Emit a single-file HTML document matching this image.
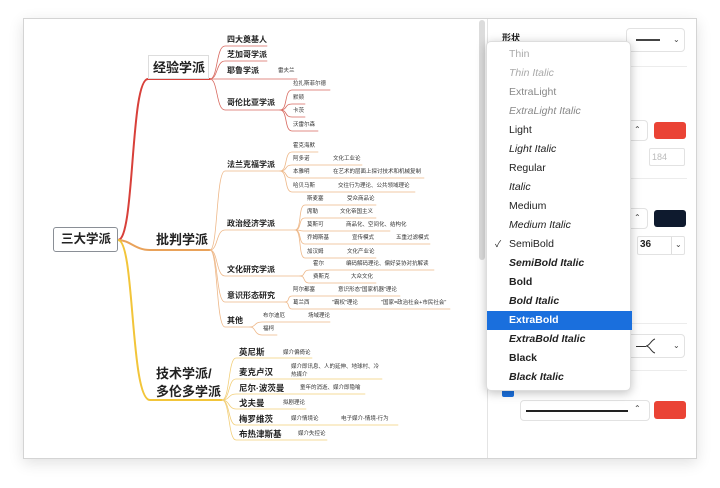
<!DOCTYPE html>
<html><head><meta charset="utf-8"><style>
*{margin:0;padding:0;box-sizing:border-box}
body{width:720px;height:488px;background:#fff;position:relative;overflow:hidden;font-family:"Liberation Sans","Noto Sans CJK SC",sans-serif}
#win{position:absolute;left:23px;top:18px;width:674px;height:441px;background:#fff;border:1px solid #d4d4d4;box-shadow:0 4px 14px rgba(0,0,0,.12)}
.t{position:absolute;white-space:nowrap;color:#222;line-height:1}
.l2{font-size:8px;font-weight:bold}
.l3{font-size:5.5px;color:#333}
.l1{font-size:13px;font-weight:bold}
#panel{position:absolute;left:487px;top:19px;width:209px;height:439px;background:#fff;border-left:1px solid #e4e4e4}
.sep{position:absolute;left:497px;width:190px;height:1px;background:#ececec}
.box{position:absolute;border:1px solid #e2e2e2;border-radius:4px;background:#fff}
.sw{position:absolute;border-radius:3px}
#menu{position:absolute;left:486px;top:41px;width:145px;height:350px;background:#fff;border-radius:5px;box-shadow:0 2px 10px rgba(0,0,0,.25);border:1px solid #ddd}
.mi{position:absolute;left:0;width:145px;height:19px;line-height:19px;padding-left:22px;font-size:10.5px;color:#222}
.chev{position:absolute;font-size:8px;color:#444}
</style></head><body>
<div id="win"></div>
<div style="position:absolute;left:479px;top:20px;width:6px;height:240px;background:#dcdcdc;border-radius:3px"></div>
<div id="panel"></div>

<svg style="position:absolute;left:0;top:0" width="720" height="488" fill="none" stroke-linecap="round">
<path d="M118 240 C135 240,130 79,148 79 L210 79" stroke="#d8403a" stroke-width="2"/>
<path d="M118 240 C130 240,135 250,150 250 L210 250" stroke="#e9a25a" stroke-width="2"/>
<path d="M118 240 C135 240,130 400,150 400 L222 400" stroke="#f2c53a" stroke-width="2"/>
<g stroke="#d86a60" stroke-width="0.8">
<path d="M210 79 C218 79,216 46,225 46 L267 46"/>
<path d="M210 79 C218 79,216 61,225 61 L267 61"/>
<path d="M210 79 L297 79"/>
<path d="M210 79 C218 79,216 110,225 110 L280 110"/>
<path d="M280 110 C288 110,284 90,292 90 L330 90"/>
<path d="M280 110 C288 110,284 104,292 104 L305 104"/>
<path d="M280 110 C288 110,284 117,292 117 L305 117"/>
<path d="M280 110 C288 110,284 131,292 131 L318 131"/>
</g>
<g stroke="#eeb889" stroke-width="0.8">
<path d="M210 250 C218 250,216 171,225 171 L280 171"/>
<path d="M280 171 C288 171,284 152,292 152 L318 152"/>
<path d="M280 171 C288 171,284 165,292 165 L362 165"/>
<path d="M280 171 C288 171,284 178,292 178 L424 178"/>
<path d="M280 171 C288 171,284 192,292 192 L415 192"/>
<path d="M210 250 C218 250,216 230,225 230 L295 230"/>
<path d="M295 230 C302 230,298 205,305 205 L376 205"/>
<path d="M295 230 C302 230,298 218,305 218 L376 218"/>
<path d="M295 230 C302 230,298 231,305 231 L390 231"/>
<path d="M295 230 C302 230,298 244,305 244 L430 244"/>
<path d="M295 230 C302 230,298 258,305 258 L376 258"/>
<path d="M210 250 C218 250,216 276,225 276 L300 276"/>
<path d="M300 276 C306 276,302 270,310 270 L434 270"/>
<path d="M300 276 C306 276,302 283,310 283 L376 283"/>
<path d="M210 250 C218 250,216 302,225 302 L285 302"/>
<path d="M285 302 C290 302,287 296,292 296 L400 296"/>
<path d="M285 302 C290 302,287 309,292 309 L450 309"/>
<path d="M210 250 C218 250,216 327,225 327 L250 327"/>
<path d="M250 327 C256 327,254 322,262 322 L330 322"/>
<path d="M250 327 C256 327,254 335,262 335 L277 335"/>
</g>
<g stroke="#f2cf7a" stroke-width="0.8">
<path d="M222 400 C230 400,228 358,236 358 L312 358"/>
<path d="M222 400 C230 400,228 379,236 379 L382 379"/>
<path d="M222 400 C230 400,228 394,236 394 L365 394"/>
<path d="M222 400 C230 400,228 409,236 409 L306 409"/>
<path d="M222 400 C230 400,228 425,236 425 L398 425"/>
<path d="M222 400 C230 400,228 440,236 440 L327 440"/>
</g>
</svg>

<div style="position:absolute;left:53px;top:227px;width:65px;height:25px;border:1px solid #8a8f96;border-radius:3px;background:#fff"></div>
<div class="t" style="left:61px;top:233px;font-size:12.5px;font-weight:bold">三大学派</div>
<div style="position:absolute;left:148px;top:55px;width:61px;height:24px;border:1px solid #ddd;background:#fff"></div>
<div class="t l1" style="left:153px;top:61px">经验学派</div>
<div class="t l1" style="left:156px;top:233px">批判学派</div>
<div class="t l1" style="left:156px;top:365px;line-height:18px">技术学派/<br>多伦多学派</div>

<div class="t l2" style="left:227px;top:36px">四大奠基人</div>
<div class="t l2" style="left:227px;top:51px">芝加哥学派</div>
<div class="t l2" style="left:227px;top:67px">耶鲁学派</div>
<div class="t l3" style="left:278px;top:69px">雷夫兰</div>
<div class="t l2" style="left:227px;top:99px">哥伦比亚学派</div>
<div class="t l3" style="left:293px;top:82px">拉扎斯菲尔德</div>
<div class="t l3" style="left:293px;top:96px">默顿</div>
<div class="t l3" style="left:293px;top:109px">卡茨</div>
<div class="t l3" style="left:293px;top:123px">沃雷尔森</div>

<div class="t l2" style="left:227px;top:161px">法兰克福学派</div>
<div class="t l3" style="left:293px;top:144px">霍克海默</div>
<div class="t l3" style="left:293px;top:157px">阿多诺</div><div class="t l3" style="left:333px;top:157px">文化工业论</div>
<div class="t l3" style="left:293px;top:170px">本雅明</div><div class="t l3" style="left:333px;top:170px">在艺术的层面上探讨技术和机械复制</div>
<div class="t l3" style="left:293px;top:184px">哈贝马斯</div><div class="t l3" style="left:338px;top:184px">交往行为理论、公共领域理论</div>
<div class="t l2" style="left:227px;top:220px">政治经济学派</div>
<div class="t l3" style="left:307px;top:197px">斯麦塞</div><div class="t l3" style="left:347px;top:197px">受众商品论</div>
<div class="t l3" style="left:307px;top:210px">席勒</div><div class="t l3" style="left:340px;top:210px">文化帝国主义</div>
<div class="t l3" style="left:307px;top:223px">莫斯可</div><div class="t l3" style="left:346px;top:223px">商品化、空间化、结构化</div>
<div class="t l3" style="left:307px;top:236px">乔姆斯基</div><div class="t l3" style="left:352px;top:236px">宣传模式</div><div class="t l3" style="left:396px;top:236px">五重过滤模式</div>
<div class="t l3" style="left:307px;top:250px">加汉姆</div><div class="t l3" style="left:347px;top:250px">文化产业论</div>
<div class="t l2" style="left:227px;top:266px">文化研究学派</div>
<div class="t l3" style="left:313px;top:262px">霍尔</div><div class="t l3" style="left:346px;top:262px">编码解码理论、偏好妥协对抗解读</div>
<div class="t l3" style="left:313px;top:275px">费斯克</div><div class="t l3" style="left:351px;top:275px">大众文化</div>
<div class="t l2" style="left:227px;top:292px">意识形态研究</div>
<div class="t l3" style="left:293px;top:288px">阿尔都塞</div><div class="t l3" style="left:338px;top:288px">意识形态"国家机器"理论</div>
<div class="t l3" style="left:293px;top:301px">葛兰西</div><div class="t l3" style="left:332px;top:301px">"霸权"理论</div><div class="t l3" style="left:381px;top:301px">"国家=政治社会+市民社会"</div>
<div class="t l2" style="left:227px;top:317px">其他</div>
<div class="t l3" style="left:263px;top:314px">布尔迪厄</div><div class="t l3" style="left:308px;top:314px">场域理论</div>
<div class="t l3" style="left:263px;top:327px">福柯</div>

<div class="t l2" style="left:239px;top:348px;font-size:8.5px">英尼斯</div><div class="t l3" style="left:283px;top:351px">媒介偏倚论</div>
<div class="t l2" style="left:239px;top:368px;font-size:8.5px">麦克卢汉</div><div class="t l3" style="left:291px;top:363px;line-height:8px">媒介即讯息、人的延伸、地球村、冷<br>热媒介</div>
<div class="t l2" style="left:239px;top:384px;font-size:8.5px">尼尔·波茨曼</div><div class="t l3" style="left:300px;top:386px">童年的消逝、媒介即隐喻</div>
<div class="t l2" style="left:239px;top:399px;font-size:8.5px">戈夫曼</div><div class="t l3" style="left:283px;top:401px">拟剧理论</div>
<div class="t l2" style="left:239px;top:415px;font-size:8.5px">梅罗维茨</div><div class="t l3" style="left:291px;top:417px">媒介情境论</div><div class="t l3" style="left:341px;top:417px">电子媒介-情境-行为</div>
<div class="t l2" style="left:239px;top:430px;font-size:8.5px">布热津斯基</div><div class="t l3" style="left:298px;top:432px">媒介失控论</div>

<div class="t" style="left:502px;top:34px;font-size:9px;font-weight:bold">形状</div>
<div class="box" style="left:626px;top:28px;width:59px;height:24px"></div>
<div style="position:absolute;left:636px;top:39px;width:24px;height:1.5px;background:#444"></div>
<div class="chev" style="left:673px;top:35px">⌄</div>
<div class="sep" style="top:66px"></div>
<div class="box" style="left:600px;top:120px;width:48px;height:21px"></div><div class="chev" style="left:634px;top:125px">⌃</div>
<div class="sw" style="left:654px;top:122px;width:32px;height:17px;background:#ea4335"></div>
<div class="box" style="left:649px;top:148px;width:36px;height:18px;border-radius:2px"></div>
<div class="t" style="left:652px;top:153px;font-size:9px;color:#bbb">184</div>
<div class="sep" style="top:178px"></div>
<div class="box" style="left:600px;top:208px;width:48px;height:21px"></div><div class="chev" style="left:634px;top:213px">⌃</div>
<div class="sw" style="left:654px;top:210px;width:32px;height:17px;background:#0e1a2e"></div>
<div class="box" style="left:637px;top:236px;width:48px;height:19px;border-radius:2px"></div>
<div class="t" style="left:640px;top:240px;font-size:10px;font-weight:bold">36</div>
<div style="position:absolute;left:671px;top:237px;width:1px;height:17px;background:#ddd"></div>
<div class="chev" style="left:675px;top:240px">⌄</div>
<div class="sep" style="top:323px"></div>
<div class="box" style="left:620px;top:334px;width:65px;height:24px"></div>
<div style="position:absolute;left:636px;top:346px;width:10px;height:1px;background:#333"></div>
<svg style="position:absolute;left:644px;top:338px" width="12" height="18" fill="none" stroke="#333" stroke-width="1"><path d="M2 8 C6 8,7 2,11 1 M2 8 C6 8,7 14,11 15"/></svg>
<div class="chev" style="left:673px;top:341px">⌄</div>
<div class="sep" style="top:370px"></div>
<div class="sw" style="left:502px;top:385px;width:12px;height:12px;background:#1a6fdd;border-radius:2px"></div>
<div class="box" style="left:520px;top:400px;width:130px;height:21px"></div>
<div style="position:absolute;left:526px;top:410px;width:102px;height:1.5px;background:#222"></div>
<div class="chev" style="left:634px;top:404px">⌃</div>
<div class="sw" style="left:654px;top:401px;width:32px;height:18px;background:#ea4335"></div>

<div id="menu">
<div class="mi" style="top:3px;color:#aaa;font-weight:300">Thin</div>
<div class="mi" style="top:22px;color:#aaa;font-style:italic">Thin Italic</div>
<div class="mi" style="top:41px;color:#888">ExtraLight</div>
<div class="mi" style="top:60px;color:#888;font-style:italic">ExtraLight Italic</div>
<div class="mi" style="top:79px">Light</div>
<div class="mi" style="top:98px;font-style:italic">Light Italic</div>
<div class="mi" style="top:117px">Regular</div>
<div class="mi" style="top:136px;font-style:italic">Italic</div>
<div class="mi" style="top:155px">Medium</div>
<div class="mi" style="top:174px;font-style:italic">Medium Italic</div>
<div class="mi" style="top:193px"><span style="position:absolute;left:8px;font-size:9px">✓</span>SemiBold</div>
<div class="mi" style="top:212px;font-style:italic;font-weight:bold">SemiBold Italic</div>
<div class="mi" style="top:231px;font-weight:bold">Bold</div>
<div class="mi" style="top:250px;font-weight:bold;font-style:italic">Bold Italic</div>
<div class="mi" style="top:269px;font-weight:bold;background:#1a6fdd;color:#fff">ExtraBold</div>
<div class="mi" style="top:288px;font-weight:bold;font-style:italic">ExtraBold Italic</div>
<div class="mi" style="top:307px;font-weight:bold">Black</div>
<div class="mi" style="top:326px;font-weight:bold;font-style:italic">Black Italic</div>
</div>
</body></html>
